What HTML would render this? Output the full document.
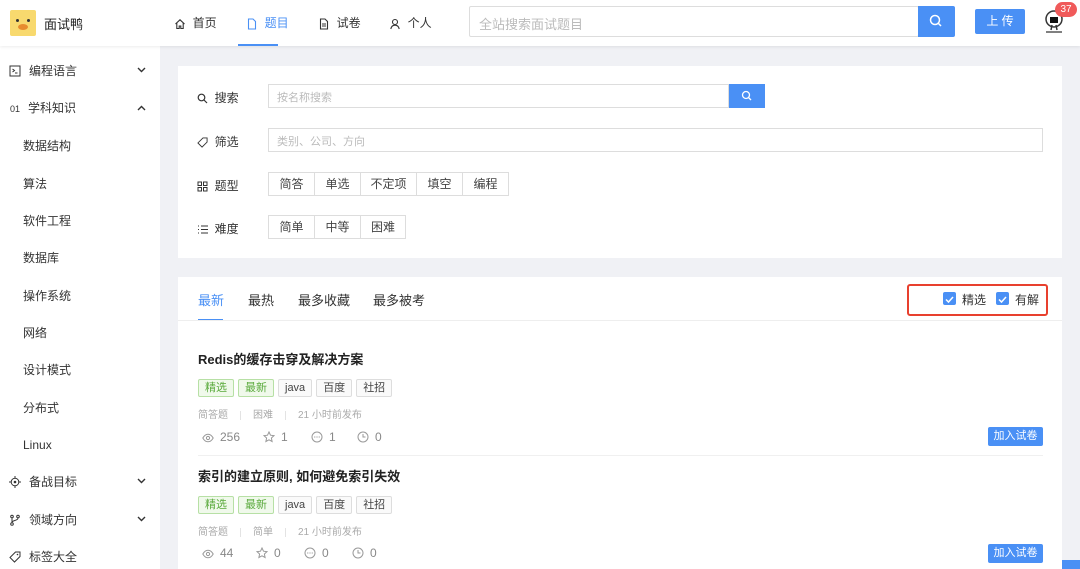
<!DOCTYPE html><html><head><meta charset="utf-8"><style>
*{box-sizing:border-box;margin:0;padding:0}
body{width:1080px;height:569px;overflow:hidden;background:#f0f1f5;font-family:"Liberation Sans","Noto Sans CJK SC",sans-serif;color:#333;position:relative;font-size:12px}
.a{position:absolute}
svg{display:inline-block;vertical-align:middle}
.hdr{left:0;top:0;width:1080px;height:46px;background:#fff;box-shadow:0 1px 3px rgba(0,0,0,.08);z-index:2}
.side{left:0;top:46px;width:160px;height:523px;background:#fff}
.si{position:absolute;left:0;width:160px;font-size:12px;color:#333;height:20px;line-height:20px}
.ic{position:absolute;left:-1px;top:4px}
.ch{position:absolute;left:127px;top:0}
.card{background:#fff}
.lbl{font-size:12px;color:#333}
.btn{position:absolute;border:1px solid #ddd;background:#fff;font-size:12px;color:#444;text-align:center;line-height:22px;height:24px}
.tag{display:inline-block;height:18px;line-height:16px;padding:0 6px;font-size:11px;border:1px solid #ddd;background:#fafafa;color:#444;margin-right:4px;border-radius:2px}
.tg{border-color:#b7e0a5;background:#f0f9eb;color:#5aaa3c}
.meta{font-size:10px;color:#aaa}
.meta i{display:inline-block;width:1px;height:9px;background:#e3e3e3;margin:0 12px;vertical-align:middle}
.st{font-size:12px;color:#888;line-height:14px}
.st svg{margin-right:6px;vertical-align:-2px}
.add{position:absolute;left:988px;width:55px;height:19px;background:#4a90f5;color:#fff;font-size:11px;text-align:center;line-height:19px;border-radius:2px}
.cb{position:absolute;width:13px;height:13px;background:#4a90f5;border-radius:2px}
</style></head><body>
<div class="a hdr">
 <div class="a" style="left:10px;top:10px;width:26px;height:26px;background:#f8d96e;border-radius:2px"><div class="a" style="left:8px;top:14px;width:10px;height:6px;background:#e78c2e;border-radius:50%"></div><div class="a" style="left:6px;top:9px;width:3px;height:3px;background:#333;border-radius:50%"></div><div class="a" style="left:17px;top:9px;width:3px;height:3px;background:#333;border-radius:50%"></div></div>
 <div class="a" style="left:44px;top:14px;font-size:13px;color:#222">面试鸭</div>
 <div class="a" style="left:174px;top:14px;font-size:12px"><svg width="12" height="12" viewBox="0 0 12 12"><path d="M1.5 6L6 1.8 10.5 6M2.8 5v5.5h2.4V8h1.6v2.5h2.4V5" fill="none" stroke="#333" stroke-width="1.1"/></svg>&nbsp; 首页</div>
 <div class="a" style="left:246px;top:14px;font-size:12px;color:#4a90f5"><svg width="12" height="12" viewBox="0 0 12 12"><path d="M2.5 1h4.5l2.5 2.5V11h-7z" fill="none" stroke="#4a90f5" stroke-width="1.1"/></svg>&nbsp; 题目</div>
 <div class="a" style="left:238px;top:44px;width:40px;height:2px;background:#4a90f5"></div>
 <div class="a" style="left:318px;top:14px;font-size:12px"><svg width="12" height="12" viewBox="0 0 12 12"><path d="M2.5 1h4.5l2.5 2.5V11h-7zM4 6h4M4 8h4" fill="none" stroke="#333" stroke-width="1.1"/></svg>&nbsp; 试卷</div>
 <div class="a" style="left:389px;top:14px;font-size:12px"><svg width="12" height="12" viewBox="0 0 12 12"><circle cx="6" cy="4" r="2.5" fill="none" stroke="#333" stroke-width="1.1"/><path d="M1.8 11c.5-2.5 2-3.8 4.2-3.8s3.7 1.3 4.2 3.8" fill="none" stroke="#333" stroke-width="1.1"/></svg>&nbsp; 个人</div>
 <div class="a" style="left:469px;top:6px;width:450px;height:31px;border:1px solid #ddd;border-radius:2px;font-size:13px;color:#bbb;padding:7px 9px">全站搜索面试题目</div>
 <div class="a" style="left:918px;top:6px;width:37px;height:31px;background:#4a90f5;border-radius:0 2px 2px 0"><svg width="37" height="31"><circle cx="17" cy="14" r="4.5" stroke="#fff" stroke-width="1.5" fill="none"/><line x1="20.5" y1="17.5" x2="23" y2="20" stroke="#fff" stroke-width="1.5"/></svg></div>
 <div class="a" style="left:975px;top:9px;width:50px;height:25px;background:#4a90f5;color:#fff;font-size:12px;text-align:center;line-height:25px;border-radius:2px">上 传</div>
 <svg class="a" style="left:1043px;top:9px" width="22" height="26" viewBox="0 0 22 26"><circle cx="11" cy="10" r="8" fill="#fff" stroke="#333" stroke-width="1.5"/><path d="M7 8h8v6H7z" fill="#111"/><path d="M9 16l-1 5M13 16l1 5" stroke="#333" stroke-width="1.5"/><path d="M3 23h16" stroke="#555" stroke-width="1.5"/></svg>
 <div class="a" style="left:1055px;top:2px;width:22px;height:15px;background:#f05a5a;color:#fff;font-size:10px;text-align:center;line-height:15px;border-radius:8px">37</div>
</div>
<div class="a side">
 <div class="si" style="top:15px;left:10px"><svg class="ic" width="12" height="12" viewBox="0 0 12 12"><rect x="1" y="1" width="10" height="10" fill="none" stroke="#333"/><path d="M3.5 4l2 1.5-2 1.5M6 8h2.5" fill="none" stroke="#333"/></svg><span style="margin-left:19px">编程语言</span><svg class="ch" style="top:6px" width="9" height="6"><path d="M1 1l3.5 3.5L8 1" fill="none" stroke="#333" stroke-width="1.4"/></svg></div>
 <div class="si" style="top:52px;left:10px"><span style="font-size:9px">01</span><span style="margin-left:8px">学科知识</span><svg class="ch" style="top:7px" width="9" height="6"><path d="M1 5l3.5-3.5L8 5" fill="none" stroke="#333" stroke-width="1.4"/></svg></div>
 <div class="si" style="top:90px;left:23px">数据结构</div>
 <div class="si" style="top:128px;left:23px">算法</div>
 <div class="si" style="top:165px;left:23px">软件工程</div>
 <div class="si" style="top:202px;left:23px">数据库</div>
 <div class="si" style="top:240px;left:23px">操作系统</div>
 <div class="si" style="top:277px;left:23px">网络</div>
 <div class="si" style="top:314px;left:23px">设计模式</div>
 <div class="si" style="top:352px;left:23px">分布式</div>
 <div class="si" style="top:389px;left:23px">Linux</div>
 <div class="si" style="top:426px;left:10px"><svg class="ic" width="12" height="12" viewBox="0 0 12 12"><circle cx="6" cy="6" r="3.8" fill="none" stroke="#333"/><circle cx="6" cy="6" r="1.3" fill="#333"/><path d="M6 0v2M6 10v2M0 6h2M10 6h2" stroke="#333"/></svg><span style="margin-left:19px">备战目标</span><svg class="ch" style="top:6px" width="9" height="6"><path d="M1 1l3.5 3.5L8 1" fill="none" stroke="#333" stroke-width="1.4"/></svg></div>
 <div class="si" style="top:464px;left:10px"><svg class="ic" width="12" height="12" viewBox="0 0 12 12"><circle cx="3" cy="2.5" r="1.3" fill="none" stroke="#333"/><circle cx="3" cy="10" r="1.3" fill="none" stroke="#333"/><circle cx="9" cy="2.5" r="1.3" fill="none" stroke="#333"/><path d="M3 4v4.7M9 4c0 3-6 2-6 4.5" fill="none" stroke="#333"/></svg><span style="margin-left:19px">领域方向</span><svg class="ch" style="top:6px" width="9" height="6"><path d="M1 1l3.5 3.5L8 1" fill="none" stroke="#333" stroke-width="1.4"/></svg></div>
 <div class="si" style="top:501px;left:10px"><svg class="ic" width="12" height="12" viewBox="0 0 12 12"><path d="M6.5 1H11v4.5L5.5 11 1 6.5z" fill="none" stroke="#333"/><circle cx="8.5" cy="3.5" r=".8" fill="#333"/></svg><span style="margin-left:19px">标签大全</span></div>
</div>
<div class="a card" style="left:178px;top:66px;width:884px;height:192px"></div>
<div class="a lbl" style="left:197px;top:89px"><svg width="11" height="11" viewBox="0 0 11 11"><circle cx="4.5" cy="4.5" r="3.3" fill="none" stroke="#333" stroke-width="1.2"/><path d="M7 7l3 3" stroke="#333" stroke-width="1.2"/></svg>&nbsp; 搜索</div>
<div class="a" style="left:268px;top:84px;width:461px;height:24px;border:1px solid #ddd;font-size:11px;color:#bbb;padding:4px 8px">按名称搜索</div>
<div class="a" style="left:729px;top:84px;width:36px;height:24px;background:#4a90f5"><svg width="36" height="24"><circle cx="17" cy="11" r="3.5" stroke="#fff" stroke-width="1.3" fill="none"/><line x1="19.5" y1="13.5" x2="22" y2="16" stroke="#fff" stroke-width="1.3"/></svg></div>
<div class="a lbl" style="left:197px;top:133px"><svg width="11" height="11" viewBox="0 0 12 12"><path d="M6.5 1H11v4.5L5.5 11 1 6.5z" fill="none" stroke="#333"/></svg>&nbsp; 筛选</div>
<div class="a" style="left:268px;top:128px;width:775px;height:24px;border:1px solid #ddd;font-size:11px;color:#bbb;padding:4px 8px">类别、公司、方向</div>
<div class="a lbl" style="left:197px;top:177px"><svg width="11" height="11" viewBox="0 0 11 11"><path d="M1 1h3.5v3.5H1zM6.5 1H10v3.5H6.5zM1 6.5h3.5V10H1zM6.5 6.5H10V10H6.5z" fill="none" stroke="#333"/></svg>&nbsp; 题型</div>
<div class="btn" style="left:268px;top:172px;width:47px">简答</div>
<div class="btn" style="left:314px;top:172px;width:47px">单选</div>
<div class="btn" style="left:360px;top:172px;width:57px">不定项</div>
<div class="btn" style="left:416px;top:172px;width:47px">填空</div>
<div class="btn" style="left:462px;top:172px;width:47px">编程</div>
<div class="a lbl" style="left:197px;top:220px"><svg width="11" height="11" viewBox="0 0 11 11"><path d="M1 2h1M1 5.5h1M1 9h1M4 2h7M4 5.5h7M4 9h7" stroke="#333"/></svg>&nbsp; 难度</div>
<div class="btn" style="left:268px;top:215px;width:47px">简单</div>
<div class="btn" style="left:314px;top:215px;width:47px">中等</div>
<div class="btn" style="left:360px;top:215px;width:46px">困难</div>
<div class="a card" style="left:178px;top:277px;width:884px;height:292px"></div>
<div class="a" style="left:198px;top:290px;font-size:13px;color:#4a90f5">最新</div>
<div class="a" style="left:198px;top:319px;width:25px;height:2px;background:#4a90f5"></div>
<div class="a" style="left:248px;top:290px;font-size:13px">最热</div>
<div class="a" style="left:298px;top:290px;font-size:13px">最多收藏</div>
<div class="a" style="left:373px;top:290px;font-size:13px">最多被考</div>
<div class="a" style="left:178px;top:320px;width:884px;height:1px;background:#eee"></div>
<div class="a" style="left:907px;top:284px;width:141px;height:32px;border:2px solid #e8402e;border-radius:3px"></div>
<div class="cb" style="left:943px;top:292px"><svg width="13" height="13"><path d="M3 6.5l2.5 2.5L10 4" fill="none" stroke="#fff" stroke-width="1.5"/></svg></div>
<div class="a" style="left:962px;top:291px;font-size:12px">精选</div>
<div class="cb" style="left:996px;top:292px"><svg width="13" height="13"><path d="M3 6.5l2.5 2.5L10 4" fill="none" stroke="#fff" stroke-width="1.5"/></svg></div>
<div class="a" style="left:1015px;top:291px;font-size:12px">有解</div>

<div class="a" style="left:198px;top:349px;font-size:13px;font-weight:bold;color:#222">Redis的缓存击穿及解决方案</div>
<div class="a" style="left:198px;top:379px"><span class="tag tg">精选</span><span class="tag tg">最新</span><span class="tag">java</span><span class="tag">百度</span><span class="tag">社招</span></div>
<div class="a meta" style="left:198px;top:406px">简答题<i></i>困难<i></i>21 小时前发布</div>
<div id="s1"></div>
<div class="a st" style="left:202px;top:430px"><svg width="12" height="10" viewBox="0 0 12 10"><path d="M.8 5C2.5 2 4 1.2 6 1.2S9.5 2 11.2 5C9.5 8 8 8.8 6 8.8S2.5 8 .8 5z" fill="none" stroke="#999"/><circle cx="6" cy="5" r="1.6" fill="none" stroke="#999"/></svg>256</div>
<div class="a st" style="left:263px;top:430px"><svg width="12" height="12" viewBox="0 0 12 12"><path d="M6 1l1.5 3.2 3.5.4-2.6 2.4.7 3.5L6 8.8 2.9 10.5l.7-3.5L1 4.6l3.5-.4z" fill="none" stroke="#999"/></svg>1</div>
<div class="a st" style="left:311px;top:430px"><svg width="12" height="12" viewBox="0 0 12 12"><circle cx="6" cy="6" r="5" fill="none" stroke="#999"/><circle cx="3.8" cy="6" r=".6" fill="#999"/><circle cx="6" cy="6" r=".6" fill="#999"/><circle cx="8.2" cy="6" r=".6" fill="#999"/></svg>1</div>
<div class="a st" style="left:357px;top:430px"><svg width="12" height="12" viewBox="0 0 12 12"><circle cx="6" cy="6" r="5" fill="none" stroke="#999"/><path d="M6 3v3h2.5" fill="none" stroke="#999"/></svg>0</div>
<div class="add" style="top:427px">加入试卷</div>
<div class="a" style="left:198px;top:455px;width:845px;height:1px;background:#f0f0f0"></div>

<div class="a" style="left:198px;top:466px;font-size:13px;font-weight:bold;color:#222">索引的建立原则, 如何避免索引失效</div>
<div class="a" style="left:198px;top:496px"><span class="tag tg">精选</span><span class="tag tg">最新</span><span class="tag">java</span><span class="tag">百度</span><span class="tag">社招</span></div>
<div class="a meta" style="left:198px;top:523px">简答题<i></i>简单<i></i>21 小时前发布</div>
<div class="a st" style="left:202px;top:546px"><svg width="12" height="10" viewBox="0 0 12 10"><path d="M.8 5C2.5 2 4 1.2 6 1.2S9.5 2 11.2 5C9.5 8 8 8.8 6 8.8S2.5 8 .8 5z" fill="none" stroke="#999"/><circle cx="6" cy="5" r="1.6" fill="none" stroke="#999"/></svg>44</div>
<div class="a st" style="left:256px;top:546px"><svg width="12" height="12" viewBox="0 0 12 12"><path d="M6 1l1.5 3.2 3.5.4-2.6 2.4.7 3.5L6 8.8 2.9 10.5l.7-3.5L1 4.6l3.5-.4z" fill="none" stroke="#999"/></svg>0</div>
<div class="a st" style="left:304px;top:546px"><svg width="12" height="12" viewBox="0 0 12 12"><circle cx="6" cy="6" r="5" fill="none" stroke="#999"/><circle cx="3.8" cy="6" r=".6" fill="#999"/><circle cx="6" cy="6" r=".6" fill="#999"/><circle cx="8.2" cy="6" r=".6" fill="#999"/></svg>0</div>
<div class="a st" style="left:352px;top:546px"><svg width="12" height="12" viewBox="0 0 12 12"><circle cx="6" cy="6" r="5" fill="none" stroke="#999"/><path d="M6 3v3h2.5" fill="none" stroke="#999"/></svg>0</div>
<div class="add" style="top:544px">加入试卷</div>
<div class="a" style="left:1062px;top:560px;width:18px;height:9px;background:#4a90f5"></div>
</body></html>
